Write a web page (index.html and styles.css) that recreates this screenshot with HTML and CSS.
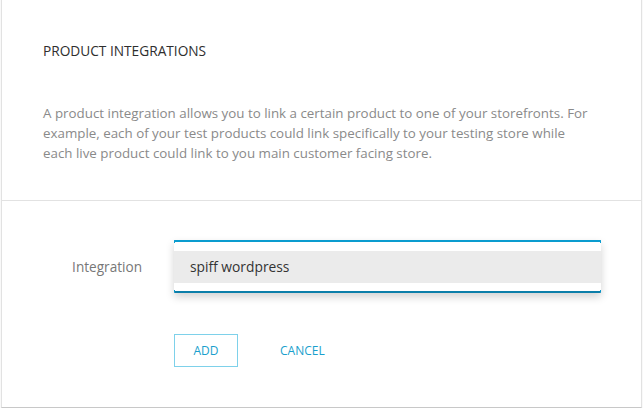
FILE: index.html
```html
<!DOCTYPE html>
<html>
<head>
<meta charset="utf-8">
<link rel="stylesheet" href="styles.css">
</head>
<body>
<div class="card">
  <div class="head">
    <h2 class="title">PRODUCT INTEGRATIONS</h2>
    <p class="desc">A product integration allows you to link a certain product to one of your storefronts. For example, each of your test products could link specifically to your testing store while<br>each live product could link to you main customer facing store.</p>
  </div>
  <div class="form">
    <div class="row">
      <label class="label">Integration</label>
      <div class="select">
        <div class="menu">
          <div class="option">spiff wordpress</div>
        </div>
      </div>
    </div>
    <div class="actions">
      <button class="btn btn-add">ADD</button>
      <button class="btn btn-cancel">CANCEL</button>
    </div>
  </div>
</div>
</body>
</html>
```
FILE: styles.css
```css
html, body {
  margin: 0;
  padding: 0;
  background: #fff;
  font-family: "Open Sans", "Liberation Sans", sans-serif;
}
body {
  padding: 0 1px;
}
.card {
  margin-top: -1px;
  height: 409px;
  box-sizing: border-box;
  border-left: 1px solid #e2e2e2;
  border-right: 1px solid #e2e2e2;
  border-bottom: 1px solid #c8c8c8;
  box-shadow: 0 1px 1px rgba(0,0,0,0.15);
  background: #fff;
}
.head {
  padding: 42px 38px 37px 41px;
  border-bottom: 1px solid #e2e2e2;
}
.title {
  margin: 0;
  font-size: 13.7px;
  font-weight: 400;
  line-height: 20px;
  color: #2e2e2e;
}
.desc {
  margin: 42px 0 0 0;
  font-size: 13.35px;
  line-height: 20px;
  color: #8a8a8a;
}
.form {
  padding: 39px 40px 0 0;
}
.row {
  display: grid;
  grid-template-columns: 172px 1fr;
  align-items: center;
}
.label {
  text-align: right;
  padding-right: 32px;
  font-size: 13.6px;
  color: #777;
}
.select {
  position: relative;
  height: 53px;
  box-sizing: border-box;
  border: 1px solid #0a9ccf;
  border-top-width: 2px;
  border-bottom: 2px solid #0b7ea9;
  border-radius: 1px;
  box-shadow: 0 4px 8px rgba(0,0,0,0.18);
}
.menu {
  position: absolute;
  left: -1px;
  right: -1px;
  top: 1px;
  bottom: 1px;
  background: #fff;
  padding-top: 8px;
}
.option {
  height: 32px;
  line-height: 32px;
  background: #ebebeb;
  padding-left: 16px;
  font-size: 13.8px;
  color: #333;
}
.actions {
  display: flex;
  align-items: center;
  gap: 22px;
  margin: 41px 0 0 172px;
}
.btn {
  font-family: "Open Sans", "Liberation Sans", sans-serif;
  font-size: 12px;
  color: #1a9fcd;
  background: #fff;
  cursor: pointer;
}
.btn-add {
  width: 64px;
  height: 33px;
  border: 1px solid #7ed1ea;
  padding: 0;
}
.btn-cancel {
  border: none;
  padding: 0 20px;
  height: 33px;
}
```
